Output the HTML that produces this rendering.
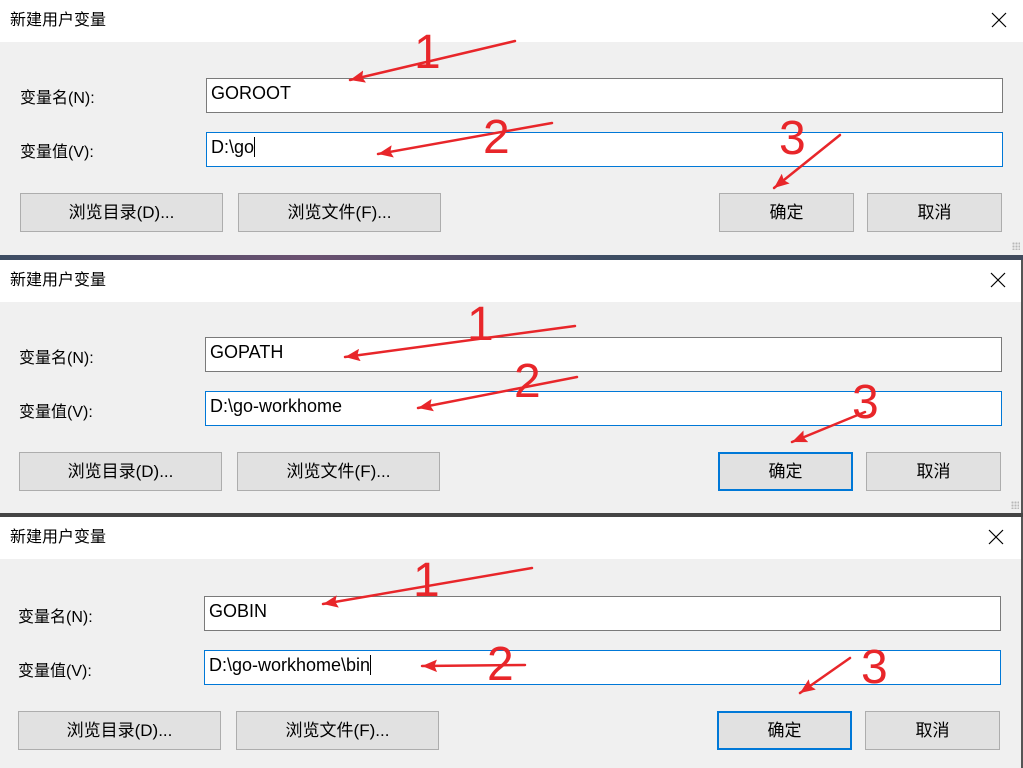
<!DOCTYPE html>
<html><head><meta charset="utf-8"><style>
*{margin:0;padding:0;box-sizing:border-box}
body{width:1023px;height:768px;overflow:hidden;background:#f0f0f0;position:relative;font-family:"Liberation Sans","Noto Sans CJK SC",sans-serif;color:#000}
.dlg{position:absolute;left:0;width:1023px;background:#f0f0f0}
.title{position:absolute;left:0;top:0;width:100%;height:42px;background:#fff}
.title span{position:absolute;left:10px;top:6px;font-size:16px}
.x{position:absolute;top:12px;width:16px;height:16px}
.lbl{position:absolute;font-size:16px}
.inp{position:absolute;height:35px;background:#fff;border:1px solid #7a7a7a;font-size:18px;padding:4px 0 0 4px}
.inp.f{border-color:#0078d7}
.btn{position:absolute;height:39px;background:#e1e1e1;border:1px solid #adadad;font-size:17px;text-align:center;line-height:37px}
.btn.b{border:2px solid #0078d7;line-height:35px}
.sep{position:absolute;left:0;width:1023px;background:#3b4a5e}
.grip{position:absolute;width:8px;height:8px;background:radial-gradient(circle,#b8b8b8 1px,transparent 1.2px) 0 0/3px 3px}
.cur{display:inline-block;width:1px;height:20px;background:#000;vertical-align:-4px}
</style></head><body>

<div class="dlg" style="top:0;height:255px">
 <div class="title"><span>新建用户变量</span>
  <svg class="x" style="left:991px" viewBox="0 0 16 16"><path d="M1 1L15 15M15 1L1 15" stroke="#000" stroke-width="1.2"/></svg></div>
 <div class="lbl" style="left:20px;top:84px">变量名(N):</div>
 <div class="lbl" style="left:20px;top:138px">变量值(V):</div>
 <div class="inp" style="left:206px;top:78px;width:797px">GOROOT</div>
 <div class="inp f" style="left:206px;top:132px;width:797px">D:\go<span class="cur"></span></div>
 <div class="btn" style="left:20px;top:193px;width:203px">浏览目录(D)...</div>
 <div class="btn" style="left:238px;top:193px;width:203px">浏览文件(F)...</div>
 <div class="btn" style="left:719px;top:193px;width:135px">确定</div>
 <div class="btn" style="left:867px;top:193px;width:135px">取消</div>
 <div class="grip" style="left:1012px;top:242px"></div>
</div>
<div class="sep" style="top:255px;height:5px;background:linear-gradient(90deg,#3d4d63,#6b5070 30%,#3d4d63 60%,#404a5c)"></div>

<div class="dlg" style="top:260px;height:253px;border-right:2px solid #555">
 <div class="title"><span>新建用户变量</span>
  <svg class="x" style="left:990px" viewBox="0 0 16 16"><path d="M1 1L15 15M15 1L1 15" stroke="#000" stroke-width="1.2"/></svg></div>
 <div class="lbl" style="left:19px;top:84px">变量名(N):</div>
 <div class="lbl" style="left:19px;top:138px">变量值(V):</div>
 <div class="inp" style="left:205px;top:77px;width:797px">GOPATH</div>
 <div class="inp f" style="left:205px;top:131px;width:797px">D:\go-workhome</div>
 <div class="btn" style="left:19px;top:192px;width:203px">浏览目录(D)...</div>
 <div class="btn" style="left:237px;top:192px;width:203px">浏览文件(F)...</div>
 <div class="btn b" style="left:718px;top:192px;width:135px">确定</div>
 <div class="btn" style="left:866px;top:192px;width:135px">取消</div>
 <div class="grip" style="left:1011px;top:241px"></div>
</div>
<div class="sep" style="top:513px;height:4px;background:#444"></div>

<div class="dlg" style="top:517px;height:251px;border-right:2px solid #555">
 <div class="title"><span>新建用户变量</span>
  <svg class="x" style="left:988px" viewBox="0 0 16 16"><path d="M1 1L15 15M15 1L1 15" stroke="#000" stroke-width="1.2"/></svg></div>
 <div class="lbl" style="left:18px;top:86px">变量名(N):</div>
 <div class="lbl" style="left:18px;top:140px">变量值(V):</div>
 <div class="inp" style="left:204px;top:79px;width:797px">GOBIN</div>
 <div class="inp f" style="left:204px;top:133px;width:797px">D:\go-workhome\bin<span class="cur"></span></div>
 <div class="btn" style="left:18px;top:194px;width:203px">浏览目录(D)...</div>
 <div class="btn" style="left:236px;top:194px;width:203px">浏览文件(F)...</div>
 <div class="btn b" style="left:717px;top:194px;width:135px">确定</div>
 <div class="btn" style="left:865px;top:194px;width:135px">取消</div>
</div>

<svg style="position:absolute;left:0;top:0" width="1023" height="768">
 <defs><marker id="a" markerWidth="6" markerHeight="5" refX="0" refY="2.5" orient="auto" markerUnits="strokeWidth"><path d="M0 2.5L6 0L5 2.5L6 5Z" fill="#e8262a"/></marker></defs>
 <g stroke="#e8262a" stroke-width="2.5" fill="none" stroke-linecap="round" marker-start="url(#a)">
  <path d="M350 80L515 41"/>
  <path d="M378 154L552 123"/>
  <path d="M774 188L840 135"/>
  <path d="M345 357L575 326"/>
  <path d="M418 408L577 377"/>
  <path d="M792 442L865 412"/>
  <path d="M323 604L532 568"/>
  <path d="M422 666L525 665"/>
  <path d="M800 693L850 658"/>
 </g>
 <g fill="#e8262a" font-family="Liberation Sans,sans-serif" font-size="48">
  <text x="414" y="68">1</text>
  <text x="483" y="153">2</text>
  <text x="779" y="154">3</text>
  <text x="467" y="340">1</text>
  <text x="514" y="397">2</text>
  <text x="852" y="418">3</text>
  <text x="413" y="596">1</text>
  <text x="487" y="680">2</text>
  <text x="861" y="683">3</text>
 </g>
</svg>
</body></html>
